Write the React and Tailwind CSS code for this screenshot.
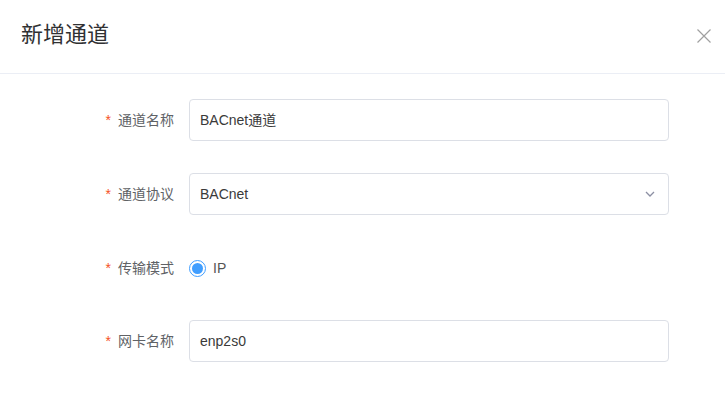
import React from 'react';

const FONT = { fontFamily: '"Liberation Sans", "Noto Sans CJK SC", sans-serif' };

const Label = ({ children }) => (
  <div className="flex w-[189px] shrink-0 items-center justify-end pr-[15px] text-[14px] text-[#606266]">
    <span className="mr-[7px] text-[#f5511e]">*</span>
    <span>{children}</span>
  </div>
);

const TextInput = ({ value }) => (
  <div className="flex h-[42px] w-[480px] items-center rounded-[4px] border border-[#dcdfe6] bg-white pl-[10px] text-[14px] text-[#3a3a3a]">
    {value}
  </div>
);

export default function App() {
  return (
    <div className="h-[410px] w-[725px] bg-white" style={FONT}>
      <div className="flex h-[74px] items-center justify-between border-b border-[#ebeef5] pl-[21px] pr-[14px] pb-[4px]">
        <span className="text-[22px] text-[#303133]">新增通道</span>
        <svg width="14" height="14" viewBox="0 0 14 14" className="mt-[2px]">
          <path d="M0.5 0.5 L13.5 13.5 M13.5 0.5 L0.5 13.5" stroke="#a0a0a0" strokeWidth="1.2" fill="none" />
        </svg>
      </div>

      <div className="flex flex-col gap-[32px] pt-[25px]">
        <div className="flex h-[42px] items-center">
          <Label>通道名称</Label>
          <TextInput value="BACnet通道" />
        </div>

        <div className="flex h-[42px] items-center">
          <Label>通道协议</Label>
          <div className="flex h-[42px] w-[480px] items-center justify-between rounded-[4px] border border-[#dcdfe6] bg-white pl-[10px] pr-[13px] text-[14px] text-[#3a3a3a]">
            <span>BACnet</span>
            <svg width="10" height="6" viewBox="0 0 10 6">
              <path d="M1 1 L5 5 L9 1" stroke="#8c8fa3" strokeWidth="1.3" fill="none" />
            </svg>
          </div>
        </div>

        <div className="flex h-[42px] items-center">
          <Label>传输模式</Label>
          <div className="flex items-center text-[14px] text-[#555]">
            <span className="flex h-[17px] w-[17px] items-center justify-center rounded-full border border-[#409eff] bg-white">
              <span className="h-[11px] w-[11px] rounded-full bg-[#409eff]" />
            </span>
            <span className="ml-[7px]">IP</span>
          </div>
        </div>

        <div className="-mt-[1px] flex h-[42px] items-center">
          <Label>网卡名称</Label>
          <TextInput value="enp2s0" />
        </div>
      </div>
    </div>
  );
}
